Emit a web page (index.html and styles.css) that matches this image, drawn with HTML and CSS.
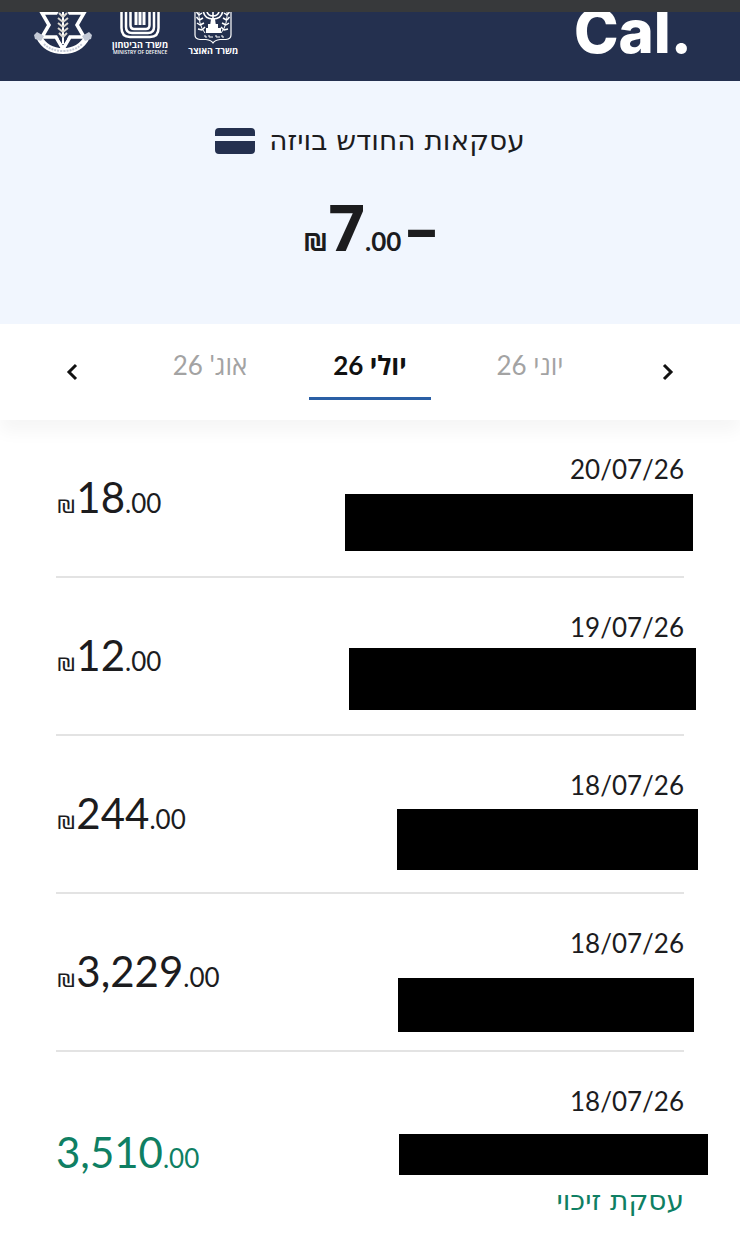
FILE: index.html
```html
<!DOCTYPE html>
<html lang="he" dir="rtl">
<head>
    <meta charset="UTF-8">
    <meta name="viewport" content="width=device-width, initial-scale=1.0">
    <title>Cal</title>
    <link rel="stylesheet" href="styles.css">
</head>
<body>
    <div class="status-bar"></div>
    <header class="header">
        <div class="cal-logo" dir="ltr">Cal.</div>
        <div class="partners">
            <div class="partner">
                <svg width="40" height="42" viewBox="0 0 40 42" fill="none" stroke="#fff">
                    <path d="M1.500 0V30Q1.500 39 10 39H30Q38.500 39 38.500 30V0" stroke-width="2.500"/>
                    <path d="M6 0V29Q6 35 12 35H28Q34 35 34 29V0" stroke-width="2.500"/>
                    <path d="M10.500 0V27Q10.500 31 14 31H26Q29.500 31 29.500 27V0" stroke-width="2.500"/>
                    <path d="M16 0V27M20 0V27M24 0V27" stroke-width="3"/>
                </svg>
                <span class="partner-name">משרד הביטחון</span>
                <span class="partner-sub">MINISTRY OF DEFENCE</span>
            </div>
            <div class="partner">
                <svg width="38" height="46" viewBox="0 0 38 46" fill="none" stroke="#fff">
                    <path d="M1 0V35Q1 39 6 39.500H12Q17 40 19 43Q21 40 26 39.500H32Q37 39 37 35V0" stroke-width="1.200"/>
                    <path d="M9 8Q9 19 19 19Q29 19 29 8M12.500 8Q12.500 16 19 16Q25.500 16 25.500 8M19 6V25" stroke-width="1.600"/>
                    <path d="M17 19H21L22 26H16ZM14 24H24V28H14ZM12 28H27V33H12Z" fill="#fff" stroke="none"/>
                    <path d="M5 9Q4 25 11 33M33 9Q34 25 27 33" stroke-width="1"/>
                    <path d="M5 15L2.500 12M5 15L8 13M5 20L2.500 17M5.500 20L9 18M6 25L3 23M6 25L10 23M8 30L4 29M8 30L11 27M33 15L35.500 12M33 15L30 13M33 20L35.500 17M32.500 20L29 18M32 25L35 23M32 25L28 23M30 30L34 29M30 30L27 27" stroke-width="1.500"/>
                    <path d="M10 36H12V38M14 36H16V38M18 36V38M21 36H23V38M25 36V38M27 36H29V38" stroke-width="1"/>
                </svg>
                <span class="partner-name">משרד האוצר</span>
            </div>
            <svg class="idf" width="58" height="56" viewBox="0 0 58 56" fill="none" stroke="#fff">
                <path d="M29 2L36 14H50L43 26L50 38H36L29 50L22 38H8L15 26L8 14H22Z" stroke-width="3.500"/>
                <path d="M25 12H33V40L29 46L25 40Z" fill="#24304f" stroke="none"/>
                <path d="M29 8V45" stroke-width="2"/>
                <path d="M29 18L25 14M29 18L33 14M29 23L24 19M29 23L34 19M29 28L24 24M29 28L34 24M29 33L24 29M29 33L34 29M29 38L25 34M29 38L33 34" stroke-width="2" stroke="#d9d6cf"/>
                <path d="M5 38Q12 52 29 52Q46 52 53 38" stroke-width="6"/>
                <path d="M0 36L3 33L10 37L7 42L1 40ZM58 36L55 33L48 37L51 42L57 40Z" fill="#c3c9d6" stroke="none"/>
                <path d="M10 45Q17 52 29 52Q41 52 48 45" stroke="#c3c9d6" stroke-width="2" stroke-dasharray="2 1"/>
            </svg>
        </div>
    </header>

    <section class="summary">
        <h1 class="summary-title">
            עסקאות החודש בויזה
            <svg width="40" height="27" viewBox="0 0 40 27">
                <path d="M0 8V4Q0 0 4 0H36Q40 0 40 4V8ZM0 13H40V22Q40 26 36 26H4Q0 26 0 22Z" fill="#24304f"/>
            </svg>
        </h1>
        <div class="total" dir="ltr"><span class="total-currency">₪</span><span class="total-main">7</span><span class="total-cents">.00</span><span class="total-sign">–</span></div>
    </section>

    <nav class="months">
        <button class="arrow" aria-label="חודש קודם">
            <svg width="12" height="18" viewBox="0 0 12 18"><path d="M2 2L9 9L2 16" fill="none" stroke="#111" stroke-width="3"/></svg>
        </button>
        <div class="tabs">
            <button class="tab">יוני 26</button>
            <button class="tab active">יולי 26</button>
            <button class="tab">אוג' 26</button>
        </div>
        <button class="arrow" aria-label="חודש הבא">
            <svg width="12" height="18" viewBox="0 0 12 18"><path d="M10 2L3 9L10 16" fill="none" stroke="#111" stroke-width="3"/></svg>
        </button>
    </nav>

    <main class="transactions">
        <div class="transaction">
            <div class="details">
                <span class="date">20/07/26</span>
                <span class="mask mask-1"></span>
            </div>
            <div class="amount" dir="ltr"><span class="currency">₪</span>18<span class="cents">.00</span></div>
        </div>
        <div class="transaction">
            <div class="details">
                <span class="date">19/07/26</span>
                <span class="mask mask-2"></span>
            </div>
            <div class="amount" dir="ltr"><span class="currency">₪</span>12<span class="cents">.00</span></div>
        </div>
        <div class="transaction">
            <div class="details">
                <span class="date">18/07/26</span>
                <span class="mask mask-3"></span>
            </div>
            <div class="amount" dir="ltr"><span class="currency">₪</span>244<span class="cents">.00</span></div>
        </div>
        <div class="transaction">
            <div class="details">
                <span class="date">18/07/26</span>
                <span class="mask mask-4"></span>
            </div>
            <div class="amount" dir="ltr"><span class="currency">₪</span>3,229<span class="cents">.00</span></div>
        </div>
        <div class="transaction credit">
            <div class="details">
                <span class="date">18/07/26</span>
                <span class="mask mask-5"></span>
                <span class="note">עסקת זיכוי</span>
            </div>
            <div class="amount" dir="ltr">3,510<span class="cents">.00</span></div>
        </div>
    </main>
</body>
</html>
```
FILE: styles.css
```css
* {
    box-sizing: border-box;
}

body {
    margin: 0;
    font-family: Lato, "Open Sans", "Noto Sans", sans-serif;
    color: #1c1c1e;
    background-color: #fff;
}

button {
    padding: 0;
    border: none;
    background: none;
    font-family: inherit;
    color: inherit;
    cursor: pointer;
}

.status-bar {
    height: 12px;
    background-color: #37393b;
}

/* header */
.header {
    display: flex;
    justify-content: space-between;
    align-items: flex-end;
    height: 69px;
    padding: 0 48px 26px 34px;
    overflow: hidden;
    color: #fff;
    background-color: #24304f;
}

.cal-logo {
    font-family: Inter, sans-serif;
    font-size: 60px;
    line-height: 60px;
    font-weight: 800;
    margin-bottom: -6px;
}

.partners {
    display: flex;
    align-items: flex-end;
    direction: ltr;
    gap: 20px;
}

.partner {
    display: flex;
    flex-direction: column;
    align-items: center;
    flex-shrink: 0;
}

.idf {
    order: -1;
}

.partner-name {
    font-family: "Open Sans", sans-serif;
    font-size: 9px;
    line-height: 9px;
    font-weight: 700;
}

.partner-sub {
    font-family: "Open Sans", sans-serif;
    font-size: 5px;
    line-height: 6px;
    font-weight: 600;
}

/* monthly total */
.summary {
    display: flex;
    flex-direction: column;
    align-items: center;
    height: 243px;
    padding-top: 40px;
    background-color: #f1f6fe;
}

.summary-title {
    display: flex;
    align-items: center;
    gap: 14px;
    margin: 0;
    font-family: "DejaVu Sans", sans-serif;
    font-size: 28px;
    line-height: 40px;
    font-weight: 400;
}

.total {
    display: flex;
    align-items: baseline;
    margin-top: 26px;
    font-weight: 700;
    line-height: 80px;
}

.total-currency {
    font-size: 30px;
}

.total-main {
    font-family: "Open Sans", sans-serif;
    font-size: 64px;
}

.total-cents {
    font-size: 26px;
}

.total-sign {
    margin-left: 4px;
    font-family: "Open Sans", sans-serif;
    font-size: 64px;
}

/* month picker */
.months {
    display: flex;
    justify-content: space-between;
    align-items: center;
    height: 96px;
    padding: 0 66px;
    background-color: #fff;
    box-shadow: 0 12px 16px rgba(0, 0, 0, 0.04);
}

.arrow {
    display: flex;
}

.tabs {
    display: flex;
    gap: 38px;
    margin-bottom: 4px;
}

.tab {
    width: 122px;
    padding: 8px 0 16px;
    border-bottom: 3px solid transparent;
    font-size: 26px;
    line-height: 32px;
    color: #a3a3a3;
}

.tab.active {
    border-bottom-color: #2a5fa5;
    font-weight: 700;
    color: #111;
}

/* transactions */
.transactions {
    padding: 0 56px;
}

.transaction {
    display: flex;
    justify-content: space-between;
    align-items: center;
    padding: 35px 0 35px;
    border-bottom: 2px solid #e3e3e3;
}

.transaction.credit {
    padding-bottom: 16px;
    border-bottom: none;
}

.details {
    display: flex;
    flex-direction: column;
    position: relative;
    width: 50%;
    min-height: 86px;
}

.date {
    font-size: 26px;
    line-height: 28px;
}

/* covers the merchant name */
.mask {
    position: absolute;
    background-color: #000;
}

.mask-1 {
    top: 39px;
    right: -9px;
    width: 348px;
    height: 57px;
}

.mask-2 {
    top: 35px;
    right: -12px;
    width: 347px;
    height: 62px;
}

.mask-3 {
    top: 38px;
    right: -14px;
    width: 301px;
    height: 61px;
}

.mask-4 {
    top: 49px;
    right: -10px;
    width: 296px;
    height: 54px;
}

.mask-5 {
    top: 47px;
    right: -24px;
    width: 309px;
    height: 41px;
}

.note {
    margin-top: 68px;
    font-family: "DejaVu Sans", sans-serif;
    font-size: 28px;
    line-height: 36px;
    color: #0f7f63;
}

.amount {
    padding-top: 4px;
    font-size: 42px;
    line-height: 50px;
}

.currency {
    font-size: 24px;
}

.cents {
    font-size: 26px;
}

.credit .amount {
    color: #0f7f63;
}
```
